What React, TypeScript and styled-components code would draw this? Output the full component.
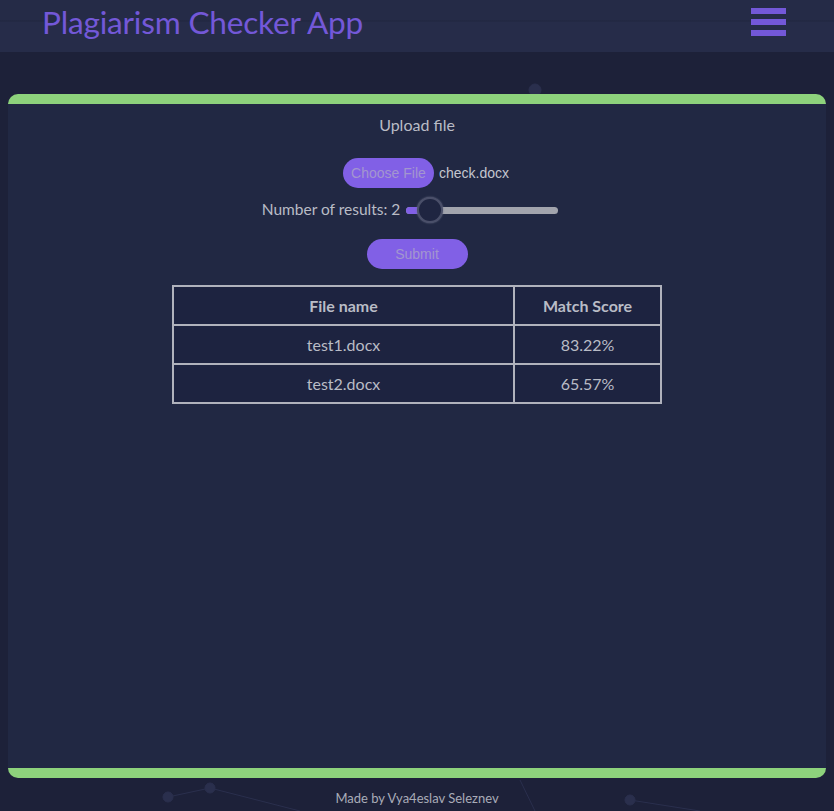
import React from "react";
import styled, { createGlobalStyle } from "styled-components";

const Global = createGlobalStyle`
  html, body { margin: 0; padding: 0; }
  body {
    background: #1d2139;
    font-family: Lato, "Noto Sans", sans-serif;
    color: #b9bcc6;
    min-height: 811px;
  }
`;

const Page = styled.div`
  position: relative;
  min-height: 811px;
  display: flex;
  flex-direction: column;
  overflow: hidden;
`;

const Backdrop = styled.svg`
  position: absolute;
  inset: 0;
  width: 100%;
  height: 100%;
  pointer-events: none;
  z-index: 0;
`;

const Header = styled.header`
  position: relative;
  z-index: 1;
  height: 52px;
  display: flex;
  align-items: center;
  justify-content: space-between;
  padding: 0 48px 0 42px;
  background: linear-gradient(#252b47 0, #252b47 20px, #20263f 21px, #262c49 22px, #262c49 100%);
`;

const Title = styled.h1`
  margin: 0;
  margin-top: -8px;
  font-size: 31.6px;
  font-weight: 400;
  color: #7358d8;
  letter-spacing: -0.2px;
`;

const Burger = styled.div`
  display: flex;
  flex-direction: column;
  gap: 5px;
  margin-top: -8px;
`;

const BurgerBar = styled.span`
  display: block;
  width: 35px;
  height: 6px;
  background: #7358d8;
`;

const Main = styled.main`
  position: relative;
  z-index: 1;
  margin: 42px 8px 0 8px;
  height: 684px;
  background: #212843;
  border-top: 10px solid #8dd27c;
  border-bottom: 10px solid #8dd27c;
  border-radius: 10px;
  box-sizing: border-box;
  display: flex;
  flex-direction: column;
  align-items: center;
`;

const Heading = styled.div`
  margin-top: 11px;
  font-size: 16px;
  color: #b9bcc6;
`;

const FileRow = styled.div`
  margin-top: 24px;
  display: flex;
  align-items: center;
  gap: 5px;
  margin-left: 18px;
`;

const PillButton = styled.button<{ $w: number }>`
  width: ${(p) => p.$w}px;
  height: 30px;
  border: none;
  border-radius: 15px;
  background: #8160e6;
  color: #a396cf;
  font-family: "Liberation Sans", Arial, sans-serif;
  font-size: 14px;
  padding: 0;
`;

const FileName = styled.span`
  font-family: "Liberation Sans", Arial, sans-serif;
  font-size: 14px;
  color: #c4c6cf;
`;

const SliderRow = styled.div`
  margin-top: 12px;
  display: flex;
  align-items: center;
  gap: 6px;
  margin-right: 14px;
`;

const SliderLabel = styled.span`
  font-size: 15.5px;
  color: #b9bcc6;
`;

const Track = styled.div`
  position: relative;
  width: 152px;
  height: 7px;
  border-radius: 4px;
  background: #a2a4ad;
  margin-top: 2px;
`;

const Fill = styled.div`
  position: absolute;
  left: 0;
  top: 0;
  bottom: 0;
  width: 22px;
  border-radius: 4px 0 0 4px;
  background: #8160e6;
`;

const Thumb = styled.div`
  position: absolute;
  left: 11px;
  top: 50%;
  width: 22px;
  height: 22px;
  margin-top: -13px;
  border-radius: 50%;
  background: #1f2541;
  border: 2px solid #4a4f69;
  box-shadow: 0 0 2px #6a6f88;
`;

const SubmitWrap = styled.div`
  margin-top: 21px;
`;

const Table = styled.table`
  margin-top: 16px;
  width: 490px;
  border-collapse: collapse;
  background: #1d2340;
  border: 2px solid #b0b2bc;
`;

const Th = styled.th<{ $w?: number }>`
  height: 37px;
  border: 2px solid #b0b2bc;
  font-weight: 700;
  font-size: 16px;
  color: #b9bcc6;
  text-align: center;
  padding: 0;
  ${(p) => (p.$w ? `width: ${p.$w}px;` : "")}
`;

const Td = styled.td`
  height: 37px;
  border: 2px solid #b0b2bc;
  font-size: 16px;
  color: #b9bcc6;
  text-align: center;
  padding: 0;
`;

const Footer = styled.footer`
  position: relative;
  z-index: 1;
  text-align: center;
  margin-top: 12px;
  font-size: 13px;
  color: #a9acb8;
`;

const rows = [
  { name: "test1.docx", score: "83.22%" },
  { name: "test2.docx", score: "65.57%" },
];

export default function App() {
  return (
    <>
      <Global />
      <Page>
        <Backdrop viewBox="0 0 834 811" preserveAspectRatio="none">
          <g stroke="#2a2f4d" strokeWidth="1" fill="#2a2f4d">
            <line x1="168" y1="797" x2="210" y2="788" />
            <line x1="210" y1="788" x2="300" y2="811" />
            <line x1="630" y1="800" x2="700" y2="811" />
            <line x1="520" y1="780" x2="535" y2="811" />
            <circle cx="168" cy="797" r="5" />
            <circle cx="210" cy="788" r="5" />
            <circle cx="630" cy="800" r="5" />
            <circle cx="535" cy="90" r="6" />
          </g>
        </Backdrop>
        <Header>
          <Title>Plagiarism Checker App</Title>
          <Burger>
            <BurgerBar />
            <BurgerBar />
            <BurgerBar />
          </Burger>
        </Header>
        <Main>
          <Heading>Upload file</Heading>
          <FileRow>
            <PillButton $w={91}>Choose File</PillButton>
            <FileName>check.docx</FileName>
          </FileRow>
          <SliderRow>
            <SliderLabel>Number of results: 2</SliderLabel>
            <Track>
              <Fill />
              <Thumb />
            </Track>
          </SliderRow>
          <SubmitWrap>
            <PillButton $w={101}>Submit</PillButton>
          </SubmitWrap>
          <Table>
            <thead>
              <tr>
                <Th>File name</Th>
                <Th $w={145}>Match Score</Th>
              </tr>
            </thead>
            <tbody>
              {rows.map((r) => (
                <tr key={r.name}>
                  <Td>{r.name}</Td>
                  <Td>{r.score}</Td>
                </tr>
              ))}
            </tbody>
          </Table>
        </Main>
        <Footer>Made by Vya4eslav Seleznev</Footer>
      </Page>
    </>
  );
}
